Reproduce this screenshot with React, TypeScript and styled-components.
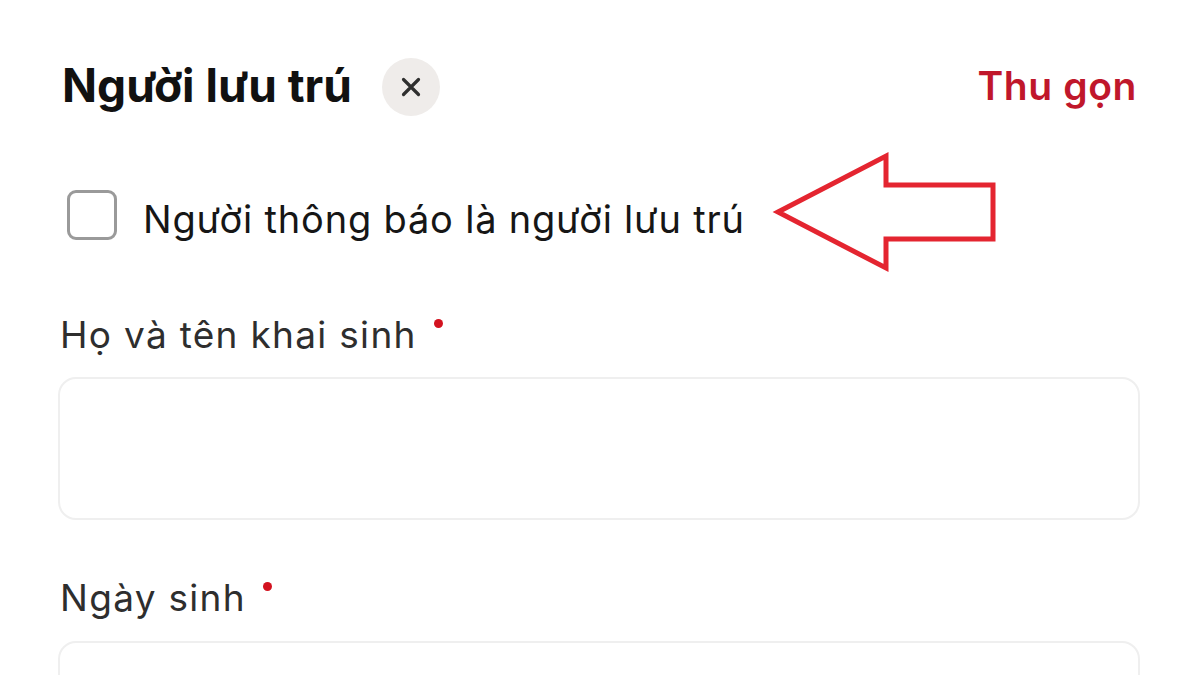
import React from "react";
import styled, { createGlobalStyle } from "styled-components";

const Global = createGlobalStyle`
  html, body { margin: 0; padding: 0; background: #ffffff; }
  body { font-family: Inter, "Noto Sans", "Liberation Sans", sans-serif; }
  * { box-sizing: border-box; }
`;

const Page = styled.div`
  position: relative;
  width: 1200px;
  height: 675px;
  overflow: hidden;
  padding: 58px 60px 0 60px;
  display: flex;
  flex-direction: column;
`;

const Header = styled.div`
  display: flex;
  align-items: center;
  height: 58px;
`;

const Title = styled.h1`
  margin: 0 0 0 2px;
  padding-bottom: 4px;
  font-size: 46px;
  line-height: 58px;
  font-weight: 700;
  color: #111111;
  letter-spacing: 0;
`;

const CloseButton = styled.button`
  margin-left: 30px;
  width: 58px;
  height: 58px;
  border-radius: 50%;
  border: none;
  background: #efecea;
  display: flex;
  align-items: center;
  justify-content: center;
  padding: 0;
`;

const Spacer = styled.div`
  flex: 1;
`;

const Collapse = styled.span`
  margin-right: 3px;
  padding-bottom: 2px;
  font-size: 39px;
  font-weight: 600;
  color: #c0172b;
  line-height: 58px;
  letter-spacing: 0.6px;
`;

const CheckRow = styled.label`
  margin-top: 74px;
  display: flex;
  align-items: flex-start;
`;

const CheckBox = styled.span`
  margin-left: 7px;
  width: 50px;
  height: 50px;
  flex-shrink: 0;
  border: 3px solid #9a9a9a;
  border-radius: 9px;
  background: #fff;
`;

const CheckText = styled.span`
  margin-left: 26px;
  padding-top: 4px;
  font-size: 38px;
  line-height: 50px;
  color: #161616;
  letter-spacing: 0.8px;
`;

const FieldLabel = styled.div<{ $gap: number }>`
  margin-top: ${(p) => p.$gap}px;
  display: flex;
  align-items: flex-start;
  font-size: 37px;
  line-height: 44px;
  letter-spacing: 1.3px;
  color: #2e2e2e;
`;

const RequiredDot = styled.span`
  margin-left: 17px;
  margin-top: 6px;
  width: 9px;
  height: 9px;
  border-radius: 50%;
  background: #d3121f;
`;

const Input = styled.div<{ $gap: number }>`
  margin-top: ${(p) => p.$gap}px;
  margin-left: -2px;
  height: 143px;
  border: 2px solid #efefef;
  border-radius: 18px;
  background: #ffffff;
  flex-shrink: 0;
`;

const Arrow = styled.svg`
  position: absolute;
  left: 770px;
  top: 150px;
`;

export default function App() {
  return (
    <>
      <Global />
      <Page>
        <Header>
          <Title>Người lưu trú</Title>
          <CloseButton aria-label="close">
            <svg width="20" height="20" viewBox="0 0 20 20">
              <path d="M2.5 2.5 L17.5 17.5 M17.5 2.5 L2.5 17.5" stroke="#2f2f2f" strokeWidth="3.2" strokeLinecap="round" />
            </svg>
          </CloseButton>
          <Spacer />
          <Collapse>Thu gọn</Collapse>
        </Header>

        <CheckRow>
          <CheckBox />
          <CheckText>Người thông báo là người lưu trú</CheckText>
        </CheckRow>

        <FieldLabel $gap={69}>
          Họ và tên khai sinh
          <RequiredDot />
        </FieldLabel>
        <Input $gap={20} />

        <FieldLabel $gap={56}>
          Ngày sinh
          <RequiredDot />
        </FieldLabel>
        <Input $gap={21} />

        <Arrow width="232" height="126" viewBox="0 0 232 126">
          <polygon
            points="8,62 116,6 116,35 223,35 223,89 116,89 116,118"
            fill="none"
            stroke="#e42530"
            strokeWidth="5"
            strokeLinejoin="miter"
          />
        </Arrow>
      </Page>
    </>
  );
}
